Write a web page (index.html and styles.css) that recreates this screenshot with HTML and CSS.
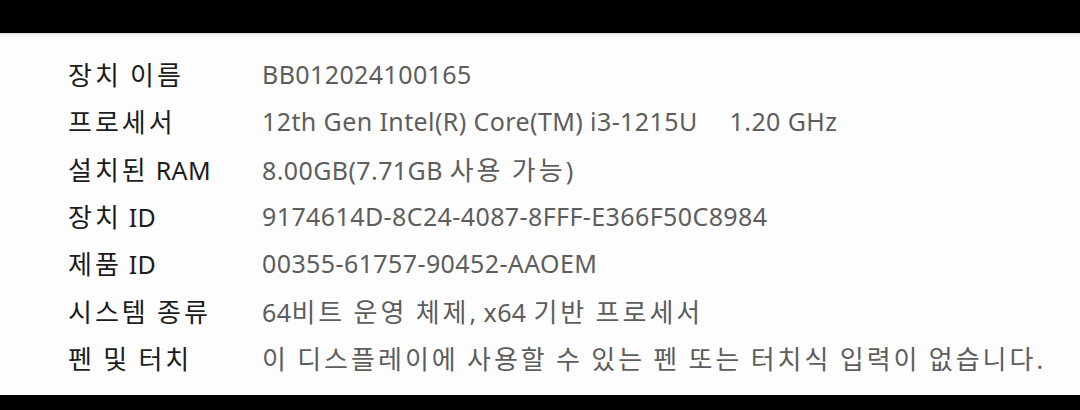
FILE: index.html
```
<!DOCTYPE html>
<html lang="ko">
<head>
<meta charset="utf-8">
<title>장치 사양</title>
<link rel="stylesheet" href="styles.css">
</head>
<body>
<div class="bar-top"></div>
<main class="panel">
  <dl class="specs">
    <dt><span class="ko">장치 이름</span></dt><dd>BB012024100165</dd>
    <dt><span class="ko">프로세서</span></dt><dd>12th Gen Intel(R) Core(TM) i3-1215U<span class="freq">1.20 GHz</span></dd>
    <dt><span class="ko">설치된</span> RAM</dt><dd>8.00GB(7.71GB <span class="ko">사용 가능</span>)</dd>
    <dt><span class="ko">장치</span> ID</dt><dd>9174614D-8C24-4087-8FFF-E366F50C8984</dd>
    <dt><span class="ko">제품</span> ID</dt><dd>00355-61757-90452-AAOEM</dd>
    <dt><span class="ko">시스템 종류</span></dt><dd>64<span class="ko">비트 운영 체제</span>, x64 <span class="ko">기반 프로세서</span></dd>
    <dt><span class="ko">펜 및 터치</span></dt><dd><span class="ko">이 디스플레이에 사용할 수 있는 펜 또는 터치식 입력이 없습니다</span>.</dd>
  </dl>
</main>
<div class="bar-bottom"></div>
</body>
</html>
```
FILE: styles.css
```
html, body {
  margin: 0;
  padding: 0;
  background: #000;
  width: 1080px;
  height: 410px;
  overflow: hidden;
}
.bar-top {
  height: 33px;
  background: #000;
}
.panel {
  height: 362px;
  box-sizing: border-box;
  background: #fefdfe;
  border-top: 1px solid #dedede;
  box-shadow: inset 0 3px 0 #f3f3f3;
  padding-top: 16px;
}
.bar-bottom {
  height: 15px;
  background: #000;
}
.specs {
  margin: 0;
  padding-left: 68px;
  display: grid;
  grid-template-columns: 194px 1fr;
  grid-auto-rows: 47.3px;
  align-items: center;
  font-family: "Noto Sans", "Noto Sans CJK KR", sans-serif;
  font-size: 25px;
  letter-spacing: 0.4px;
  white-space: nowrap;
}
.specs dt {
  color: #1c1c1c;
  margin: 0;
}
.specs dd {
  color: #5d5d5d;
  margin: 0;
}
.ko {
  font-family: "Noto Sans CJK KR", sans-serif;
  font-size: 26px;
  letter-spacing: 3px;
  word-spacing: -2px;
}
.freq {
  margin-left: 32px;
}
```
